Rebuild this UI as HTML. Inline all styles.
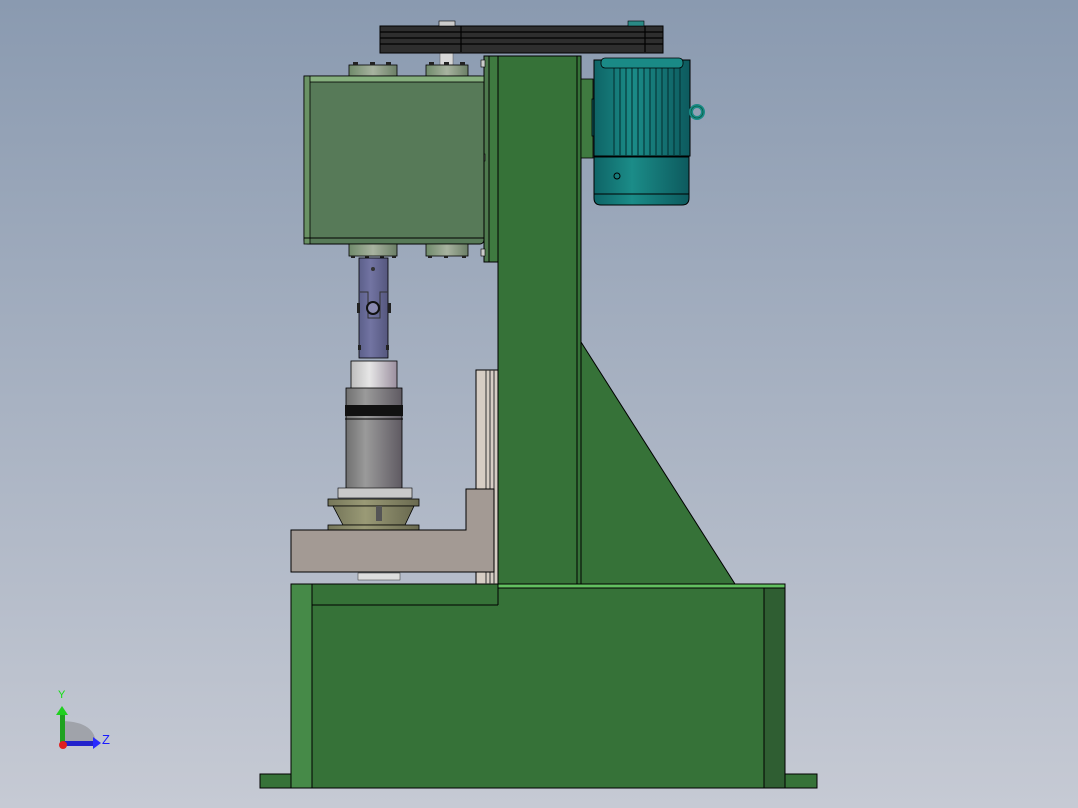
<!DOCTYPE html>
<html><head><meta charset="utf-8"><style>
html,body{margin:0;padding:0;width:1078px;height:808px;overflow:hidden}
svg{display:block}
text{font-family:"Liberation Sans",sans-serif}
</style></head><body>
<svg width="1078" height="808" viewBox="0 0 1078 808" xmlns="http://www.w3.org/2000/svg">
<defs>
<linearGradient id="bg" x1="0" y1="0" x2="0" y2="1">
<stop offset="0" stop-color="#8a9ab0"/><stop offset="1" stop-color="#c6cad4"/></linearGradient>
<linearGradient id="cyl" x1="0" y1="0" x2="1" y2="0">
<stop offset="0" stop-color="#707070"/><stop offset="0.35" stop-color="#9a9a9a"/><stop offset="1" stop-color="#5f5a62"/></linearGradient>
<linearGradient id="silv" x1="0" y1="0" x2="1" y2="0">
<stop offset="0" stop-color="#bdbdbd"/><stop offset="0.4" stop-color="#e6e6e6"/><stop offset="1" stop-color="#9b8f9f"/></linearGradient>
<linearGradient id="purp" x1="0" y1="0" x2="1" y2="0">
<stop offset="0" stop-color="#5c5f8a"/><stop offset="0.4" stop-color="#7274a2"/><stop offset="1" stop-color="#55577e"/></linearGradient>
<linearGradient id="teal" x1="0" y1="0" x2="1" y2="0">
<stop offset="0" stop-color="#0e6466"/><stop offset="0.4" stop-color="#1b8c88"/><stop offset="1" stop-color="#0d5a5e"/></linearGradient>
<linearGradient id="olive" x1="0" y1="0" x2="1" y2="0">
<stop offset="0" stop-color="#76775a"/><stop offset="0.4" stop-color="#9a9a76"/><stop offset="1" stop-color="#6a6a50"/></linearGradient>
<linearGradient id="fl" x1="0" y1="0" x2="1" y2="0">
<stop offset="0" stop-color="#6f8a6a"/><stop offset="0.5" stop-color="#a8b3a0"/><stop offset="1" stop-color="#6b7f66"/></linearGradient>
</defs>
<rect width="1078" height="808" fill="url(#bg)"/>

<!-- feet -->
<rect x="260" y="774" width="32" height="14" fill="#367238" stroke="#000" stroke-width="1"/>
<rect x="785" y="774" width="32" height="14" fill="#367238" stroke="#000" stroke-width="1"/>
<!-- base -->
<rect x="291" y="584" width="494" height="204" fill="#367238" stroke="#000" stroke-width="1"/>
<rect x="291" y="584" width="21" height="204" fill="#468a48" stroke="#000" stroke-width="1"/>
<rect x="764" y="588" width="21" height="200" fill="#2f5e32" stroke="#000" stroke-width="1"/>
<rect x="498" y="584" width="287" height="4" fill="#62c060" stroke="#000" stroke-width="1"/>
<line x1="312" y1="605" x2="498" y2="605" stroke="#000"/>
<line x1="498" y1="584" x2="498" y2="605" stroke="#000"/>

<!-- gusset -->
<polygon points="581,342 735,584 581,584" fill="#367238" stroke="#000" stroke-width="1"/>
<!-- beige rail -->
<rect x="476" y="370" width="22" height="214" fill="#d6cdc4" stroke="#000" stroke-width="1"/>
<line x1="486" y1="370" x2="486" y2="584" stroke="#333"/>
<line x1="490" y1="370" x2="490" y2="584" stroke="#333"/>
<line x1="494" y1="370" x2="494" y2="584" stroke="#333"/>
<!-- column -->
<rect x="484" y="56" width="14" height="206" fill="#4e7a4e" stroke="#000" stroke-width="1"/>
<rect x="489" y="56" width="9" height="206" fill="#3f7a40" stroke="#000" stroke-width="1"/>
<rect x="498" y="56" width="83" height="528" fill="#367238" stroke="#000" stroke-width="1"/>
<line x1="577" y1="56" x2="577" y2="584" stroke="#000"/>
<rect x="481" y="60" width="4" height="7" fill="#ccc" stroke="#000" stroke-width=".6"/>
<rect x="481" y="154" width="4" height="7" fill="#ccc" stroke="#000" stroke-width=".6"/>
<rect x="481" y="249" width="4" height="7" fill="#ccc" stroke="#000" stroke-width=".6"/>

<!-- shaft top -->
<rect x="440" y="52" width="13" height="13" fill="#d8d8d8" stroke="#555" stroke-width=".5"/>
<!-- top flanges -->
<rect x="349" y="65" width="48" height="12" fill="url(#fl)" stroke="#000" stroke-width=".8"/>
<rect x="426" y="65" width="42" height="12" fill="url(#fl)" stroke="#000" stroke-width=".8"/>
<g fill="#222"><rect x="353" y="62" width="5" height="3"/><rect x="370" y="62" width="5" height="3"/><rect x="386" y="62" width="5" height="3"/><rect x="429" y="62" width="5" height="3"/><rect x="444" y="62" width="5" height="3"/><rect x="460" y="62" width="5" height="3"/></g>
<!-- gearbox -->
<rect x="304" y="76" width="180" height="168" rx="4" fill="#577a58" stroke="#000" stroke-width="1"/>
<rect x="304" y="76" width="180" height="6" fill="#86b07e" stroke="#000" stroke-width=".8"/>
<rect x="304" y="76" width="6" height="168" fill="#6a9264" stroke="#000" stroke-width=".8"/>
<line x1="304" y1="238" x2="484" y2="238" stroke="#000"/>
<!-- bottom flanges -->
<rect x="349" y="244" width="48" height="12" fill="url(#fl)" stroke="#000" stroke-width=".8"/>
<rect x="426" y="244" width="42" height="12" fill="url(#fl)" stroke="#000" stroke-width=".8"/>
<g fill="#222"><rect x="351" y="256" width="4" height="2"/><rect x="365" y="256" width="4" height="2"/><rect x="380" y="256" width="4" height="2"/><rect x="392" y="256" width="4" height="2"/><rect x="428" y="256" width="4" height="2"/><rect x="444" y="256" width="4" height="2"/><rect x="462" y="256" width="4" height="2"/></g>

<!-- belt -->
<rect x="380" y="26" width="283" height="27" fill="#2e2e2e" stroke="#000" stroke-width="1"/>
<g stroke="#000" stroke-width="1.2"><line x1="380" y1="32" x2="663" y2="32"/><line x1="380" y1="38" x2="663" y2="38"/><line x1="380" y1="44" x2="663" y2="44"/><line x1="461" y1="26" x2="461" y2="52"/><line x1="645" y1="26" x2="645" y2="52"/></g>
<rect x="439" y="21" width="16" height="5" fill="#ccc" stroke="#000" stroke-width=".6"/>
<rect x="628" y="21" width="16" height="5" fill="#2a8a86" stroke="#000" stroke-width=".6"/>

<!-- motor -->
<rect x="581" y="79" width="12" height="79" fill="#3f7a40" stroke="#000" stroke-width=".8"/>
<rect x="592" y="99" width="22" height="37" fill="#0e5b5e" stroke="#000" stroke-width=".8"/>
<rect x="594" y="60" width="96" height="96" fill="url(#teal)" stroke="#000" stroke-width="1"/>
<g stroke="#06383a" stroke-width="1.2">
<line x1="614" y1="68" x2="614" y2="156"/><line x1="620" y1="68" x2="620" y2="156"/><line x1="626" y1="68" x2="626" y2="156"/><line x1="632" y1="68" x2="632" y2="156"/><line x1="638" y1="68" x2="638" y2="156"/><line x1="644" y1="68" x2="644" y2="156"/><line x1="650" y1="68" x2="650" y2="156"/><line x1="656" y1="68" x2="656" y2="156"/><line x1="662" y1="68" x2="662" y2="156"/><line x1="668" y1="68" x2="668" y2="156"/><line x1="674" y1="68" x2="674" y2="156"/><line x1="680" y1="68" x2="680" y2="156"/></g>
<rect x="601" y="58" width="82" height="10" rx="4" fill="#1a8a86" stroke="#000" stroke-width=".8"/>
<path d="M594 157 H689 V198 Q689 205 682 205 H601 Q594 205 594 198 Z" fill="url(#teal)" stroke="#000" stroke-width="1"/>
<line x1="594" y1="194" x2="689" y2="194" stroke="#000"/>
<circle cx="617" cy="176" r="3" fill="none" stroke="#000"/>
<circle cx="697" cy="112" r="6" fill="none" stroke="#1a8a86" stroke-width="4"/>
<circle cx="697" cy="112" r="6" fill="none" stroke="#053" stroke-width=".6"/>

<!-- universal joint -->
<rect x="359" y="258" width="29" height="100" fill="url(#purp)" stroke="#000" stroke-width=".8"/>
<circle cx="373" cy="269" r="2" fill="#333"/>
<path d="M360 292 H368 V318 H380 V292 H388" fill="none" stroke="#333" stroke-width="1"/>
<circle cx="373" cy="308" r="6" fill="#8a8ab0" stroke="#111" stroke-width="2"/>
<rect x="357" y="303" width="3" height="10" fill="#222"/><rect x="388" y="303" width="3" height="10" fill="#222"/>
<rect x="358" y="345" width="3" height="5" fill="#222"/><rect x="386" y="345" width="3" height="5" fill="#222"/>
<!-- silver -->
<rect x="351" y="361" width="46" height="28" fill="url(#silv)" stroke="#000" stroke-width=".8"/>
<!-- grey cylinder -->
<rect x="346" y="388" width="56" height="105" fill="url(#cyl)" stroke="#000" stroke-width=".8"/>
<rect x="345" y="405" width="58" height="11" fill="#111"/>
<line x1="345" y1="419" x2="403" y2="419" stroke="#000"/>
<!-- base flange -->
<rect x="338" y="488" width="74" height="10" fill="#c9c9c9" stroke="#000" stroke-width=".6"/>
<rect x="328" y="499" width="91" height="7" fill="url(#olive)" stroke="#000" stroke-width=".8"/>
<path d="M333 506 H414 L405 525 H343 Z" fill="url(#olive)" stroke="#000" stroke-width=".8"/>
<rect x="376" y="506" width="6" height="15" fill="#555"/>
<rect x="328" y="525" width="91" height="5" fill="url(#olive)" stroke="#000" stroke-width=".8"/>
<!-- grey L bracket -->
<path d="M291 530 H466 V489 H494 V572 H291 Z" fill="#a39a94" stroke="#000" stroke-width="1"/>
<rect x="358" y="573" width="42" height="7" fill="#ddd" stroke="#333" stroke-width=".5"/>

<!-- triad -->
<path d="M63 721 Q95 722 96 744 H63 Z" fill="#a0a3aa"/>
<rect x="60" y="713" width="5" height="31" fill="#1fa21f"/>
<polygon points="56,715 62,706 68,715" fill="#1fd01f"/>
<rect x="63" y="741" width="31" height="5" fill="#2222cc"/>
<polygon points="93,737 101,743 93,749" fill="#2a2aff"/>
<circle cx="63" cy="745" r="4" fill="#e02020"/>
<text x="58" y="698" font-size="11" fill="#10e010">Y</text>
<text x="102" y="744" font-size="13" fill="#1a1aff">Z</text>
</svg>
</body></html>
